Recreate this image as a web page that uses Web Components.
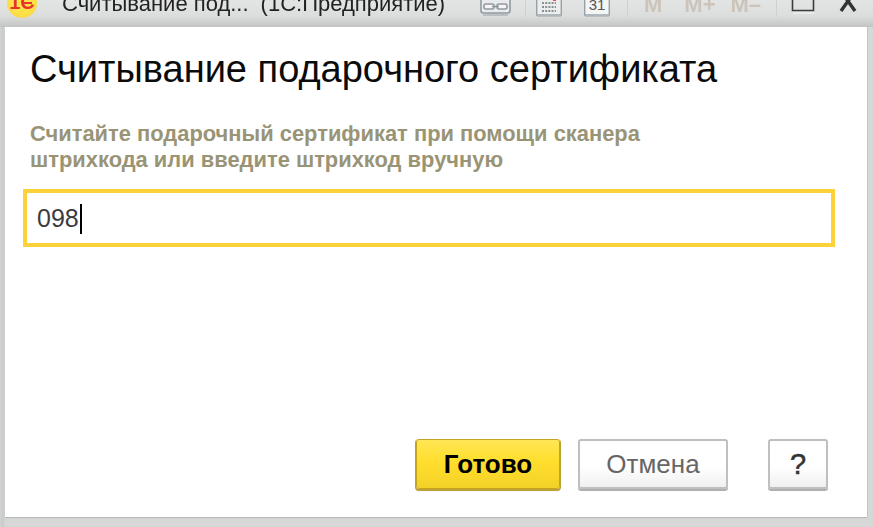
<!DOCTYPE html>
<html lang="ru">
<head>
<meta charset="utf-8">
<title>Считывание подарочного сертификата</title>
<style>
  html, body { margin: 0; height: 100%; }
  body {
    width: 873px;
    height: 527px;
    overflow: hidden;
    background: #d5d7d7;
    font-family: "Liberation Sans", Arial, sans-serif;
  }
</style>
</head>
<body>
<app-window>
  <title-bar slot="bar" caption="Считывание под..." app="(1С:Предприятие)"></title-bar>
  <gift-dialog heading="Считывание подарочного сертификата">
    <span slot="hint">Считайте подарочный сертификат при помощи сканера<br>штрихкода или введите штрихкод вручную</span>
    <barcode-input slot="field" value="098"></barcode-input>
    <dialog-button slot="actions" kind="primary">Готово</dialog-button>
    <dialog-button slot="actions" kind="plain">Отмена</dialog-button>
    <dialog-button slot="help" kind="help">?</dialog-button>
  </gift-dialog>
</app-window>

<script>
class AppWindow extends HTMLElement {
  constructor() {
    super();
    this.attachShadow({ mode: "open" }).innerHTML = `
      <style>
        :host {
          display: flex;
          flex-direction: column;
          width: 873px;
          height: 527px;
          overflow: hidden;
        }
        .body {
          flex: 1;
          display: flex;
          padding: 0 6px 10px 5px;
          background: linear-gradient(to right, #d2d4d4, #c9cbcb 3px, #d6d8d8 5px);
        }
      </style>
      <slot name="bar"></slot>
      <div class="body"><slot></slot></div>
    `;
  }
}

class TitleBar extends HTMLElement {
  constructor() {
    super();
    this.attachShadow({ mode: "open" }).innerHTML = `
      <style>
        :host {
          display: flex;
          align-items: flex-end;
          height: 27px;
          flex: none;
          overflow: hidden;
          background: linear-gradient(to bottom, #e3e4e4 0, #dcdddd 16px, #c2c4c4 27px);
          color: #222;
        }
        .logo {
          position: relative;
          flex: none;
          display: flex;
          justify-content: center;
          width: 30px;
          height: 30px;
          margin: 0 0 9px 7px;
          border-radius: 50%;
          background: radial-gradient(circle at 50% 45%, #ffe14a 55%, #f5c93a 100%);
          overflow: hidden;
          filter: blur(.5px);
          color: #e8352a;
          font-size: 20px;
          font-weight: bold;
          line-height: 22px;
          padding-top: 3px;
          box-sizing: border-box;
        }
        .logo::after {
          content: "";
          position: absolute;
          left: 15px;
          top: 14px;
          width: 10px;
          height: 2px;
          background: #e8352a;
        }
        .caption {
          flex: none;
          width: 418px;
          display: flex;
          margin: 0 0 11px 25px;
          font-size: 22px;
          line-height: 24px;
          white-space: pre;
          filter: blur(.35px);
        }
        .app { margin-left: 12px; }
        .tools {
          flex: 1;
          display: flex;
          align-items: flex-end;
          padding-bottom: 10px;
          filter: blur(.5px);
        }
        .tools svg { flex: none; display: block; }
        .sep { flex: none; width: 1px; height: 17px; background: #cfd0d0; }
        .mem {
          flex: none;
          font-size: 22px;
          line-height: 22px;
          font-weight: bold;
          color: #cbc4bb;
          white-space: pre;
          margin-bottom: 1px;
        }
      </style>
      <div class="logo">1С</div>
      <div class="caption"><span id="caption"></span><span class="app" id="app"></span></div>
      <div class="tools">
        <svg width="31" height="19" viewBox="0 0 31 19" fill="none" stroke="#8f9ba3" stroke-width="1.6">
          <rect x="1" y="-1" width="29" height="16" rx="2.5" fill="#e8eaeb"/>
          <rect x="4" y="6" width="10" height="5" rx="2" fill="#f5f5f5"/>
          <rect x="17" y="6" width="10" height="5" rx="2" fill="#f5f5f5"/>
          <path d="M12 8.5 H19"/>
          <path d="M3 17 H28" stroke="#b3b8bb"/>
        </svg>
        <span class="sep" style="margin-left:14px"></span>
        <svg width="26" height="19" viewBox="0 0 26 19" style="margin-left:10px">
          <rect x=".7" y="-4" width="24.6" height="21" fill="#eceded" stroke="#96a1a8" stroke-width="1.4"/>
          <path d="M6 1 H20 M6 5 H20 M6 9 H20 M6 13 H20" stroke="#8b8f92" stroke-width="1.8" stroke-dasharray="2 1.2"/>
          <rect x="17" y="0" width="3" height="3" fill="#e8544c"/>
          <path d="M1 18 H25" stroke="#b3b8bb" stroke-width="1.6"/>
        </svg>
        <svg width="26" height="19" viewBox="0 0 26 19" style="margin-left:22px">
          <rect x=".7" y="-4" width="24.6" height="21" fill="#f4f5f5" stroke="#96a1a8" stroke-width="1.4"/>
          <text x="13" y="12" text-anchor="middle" font-size="15" fill="#555" font-family="Liberation Sans">31</text>
          <path d="M1 18 H25" stroke="#b3b8bb" stroke-width="1.6"/>
        </svg>
        <span class="sep" style="margin-left:17px"></span>
        <span class="mem" style="margin-left:16px">M</span>
        <span class="mem" style="margin-left:22px">M+</span>
        <span class="mem" style="margin-left:15px">M–</span>
        <span class="sep" style="margin-left:15px"></span>
        <svg width="24" height="19" viewBox="0 0 24 19" style="margin-left:14px;margin-bottom:1px" fill="none">
          <path d="M1.5 0 V13.5 H22.5 V0" stroke="#3c3c3c" stroke-width="1.6"/>
          <path d="M2 16 H23" stroke="#f0f0f0" stroke-width="1.4"/>
        </svg>
        <svg width="20" height="15" viewBox="0 0 20 15" style="margin:0 0 5px 23px" fill="none" stroke="#333" stroke-width="3.4">
          <path d="M5 -3 L17 14 M15 -3 L3 14"/>
        </svg>
      </div>
    `;
  }

  connectedCallback() {
    this.shadowRoot.getElementById("caption").textContent = this.getAttribute("caption");
    this.shadowRoot.getElementById("app").textContent = this.getAttribute("app");
  }
}

class GiftDialog extends HTMLElement {
  constructor() {
    super();
    this.attachShadow({ mode: "open" }).innerHTML = `
      <style>
        :host {
          flex: 1;
          min-width: 0;
          display: flex;
          flex-direction: column;
          box-sizing: border-box;
          background: #fff;
          padding: 18px 39px 28px 18px;
          box-shadow: 0 1px 1px #b8baba, 1px 0 0 #c6c8c8;
        }
        h1 {
          margin: 0 0 0 7px;
          font-size: 38px;
          line-height: 48px;
          font-weight: normal;
          color: #0b0b0b;
          white-space: nowrap;
        }
        .hint {
          margin: 28px 0 0 7px;
          font-size: 21.9px;
          line-height: 26px;
          font-weight: bold;
          color: #9a9476;
          white-space: nowrap;
        }
        .field { margin-top: 16px; }
        .bottom {
          margin-top: auto;
          display: flex;
          align-items: flex-start;
        }
        .main { margin-left: auto; display: flex; gap: 18px; }
        .help { margin-left: 40px; }
      </style>
      <h1 id="heading"></h1>
      <div class="hint"><slot name="hint"></slot></div>
      <div class="field"><slot name="field"></slot></div>
      <div class="bottom">
        <div class="main"><slot name="actions"></slot></div>
        <div class="help"><slot name="help"></slot></div>
      </div>
    `;
  }

  connectedCallback() {
    this.shadowRoot.getElementById("heading").textContent = this.getAttribute("heading");
  }
}

class BarcodeInput extends HTMLElement {
  constructor() {
    super();
    this.attachShadow({ mode: "open" }).innerHTML = `
      <style>
        :host {
          display: flex;
          align-items: center;
          box-sizing: border-box;
          height: 58px;
          width: 812px;
          padding-left: 10px;
          border: 4px solid #fdd13a;
          background: #fff;
          color: #3c3c3c;
          font-size: 25px;
        }
        .caret {
          width: 2px;
          height: 30px;
          margin: 1px 0 0 1px;
          background: #000;
        }
      </style>
      <span id="value"></span><span class="caret"></span>
    `;
  }

  connectedCallback() {
    this.shadowRoot.getElementById("value").textContent = this.getAttribute("value");
  }
}

class DialogButton extends HTMLElement {
  constructor() {
    super();
    this.attachShadow({ mode: "open" }).innerHTML = `
      <style>
        :host {
          display: flex;
          align-items: center;
          justify-content: center;
          box-sizing: border-box;
          height: 50px;
          border-radius: 3px;
          font-size: 26px;
          cursor: pointer;
        }
        :host([kind="primary"]) {
          width: 144px;
          border: 1px solid #c5a520;
          background: linear-gradient(to bottom, #ffe655, #ffde2c 45%, #f3d228);
          box-shadow: 0 1px 0 1px #bba233, 0 2px 1px #b9b9b9;
          font-weight: bold;
          color: #000;
        }
        :host([kind="plain"]), :host([kind="help"]) {
          border: 2px solid #bfbfbf;
          background: linear-gradient(to bottom, #fff 55%, #f0f0f0);
          box-shadow: 0 2px 0 #b0b0b0;
        }
        :host([kind="plain"]) { width: 150px; color: #666; }
        :host([kind="help"]) {
          width: 60px;
          color: #333;
          font-size: 29px;
          -webkit-text-stroke: .5px #333;
        }
      </style>
      <slot></slot>
    `;
  }
}

customElements.define("app-window", AppWindow);
customElements.define("title-bar", TitleBar);
customElements.define("gift-dialog", GiftDialog);
customElements.define("barcode-input", BarcodeInput);
customElements.define("dialog-button", DialogButton);
</script>
</body>
</html>
